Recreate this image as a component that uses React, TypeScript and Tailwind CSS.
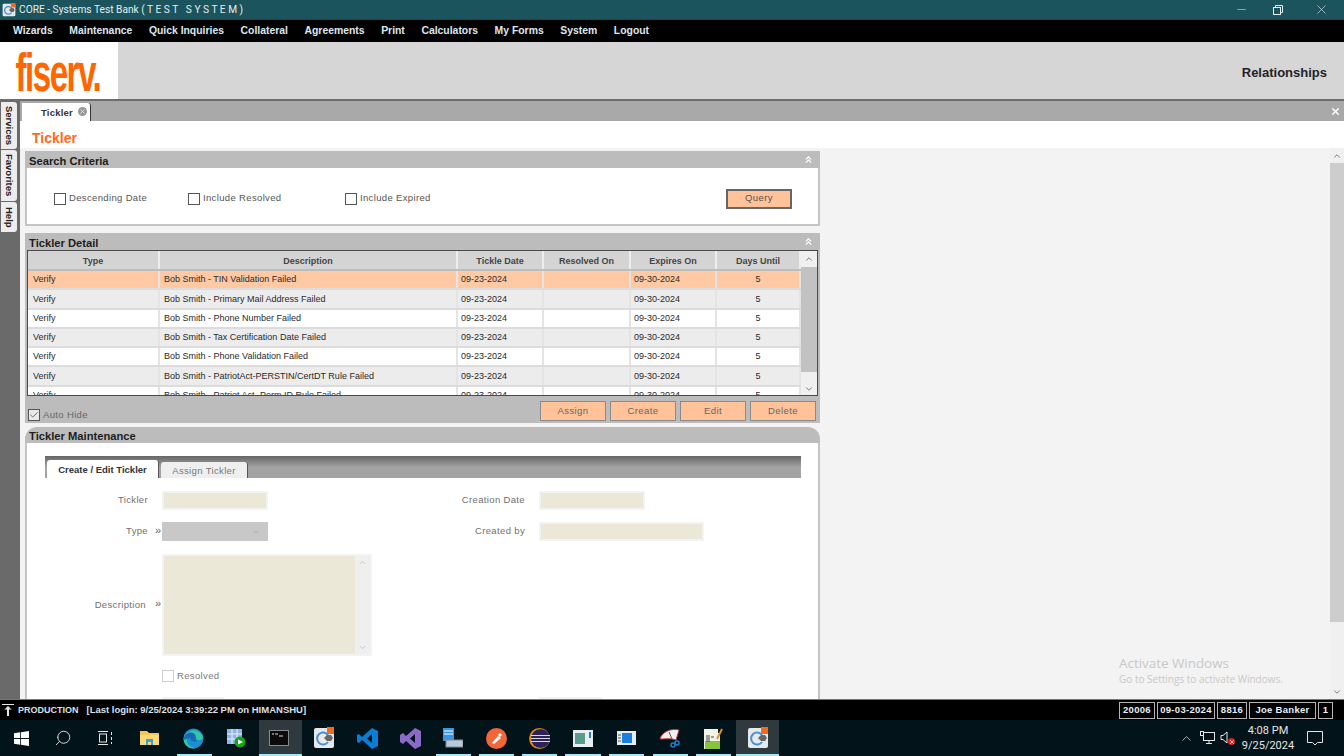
import React from 'react';
import { ChevronsUp, ChevronUp, ChevronDown, ChevronDown as Caret, X, Minus, Search, Check } from 'lucide-react';

const MENU = ['Wizards', 'Maintenance', 'Quick Inquiries', 'Collateral', 'Agreements', 'Print', 'Calculators', 'My Forms', 'System', 'Logout'];

const ROWS = [
    'Bob Smith - TIN Validation Failed',
    'Bob Smith - Primary Mail Address Failed',
    'Bob Smith - Phone Number Failed',
    'Bob Smith - Tax Certification Date Failed',
    'Bob Smith - Phone Validation Failed',
    'Bob Smith - PatriotAct-PERSTIN/CertDT Rule Failed',
    'Bob Smith - Patriot Act- Perm ID Rule Failed',
];

const COLS = 'grid grid-cols-[132px_298px_86px_87px_86px_84px]';

const CoreIcon: React.FC<{ size?: number }> = ({ size = 22 }) => (
    <svg width={size} height={size} viewBox="0 0 22 22">
        <rect x="1" y="1" width="20" height="20" rx="2" fill="#e6e9ec" />
        <rect x="14" y="0" width="7" height="7" fill="#f26a1b" />
        <path d="M15 8a6 6 0 1 0 0 7" fill="none" stroke="#4a90d0" strokeWidth="2" />
        <path d="M11 11l3-3h4l2 3-2 3h-4z" fill="#666" />
    </svg>
);

const SectionHeader: React.FC<{ title: string; collapse?: boolean; rounded?: boolean }> = ({ title, collapse, rounded }) => (
    <div className={`bg-[#bcbcbc] flex items-center justify-between pl-1 pr-1.5 ${rounded ? 'h-[16px] pt-[2px] rounded-t-[12px]' : 'h-[17px] pt-[3px]'}`}>
        <span className="text-[11.2px] font-bold text-[#1c1c1c]">{title}</span>
        {collapse && <ChevronsUp size={11} strokeWidth={2.5} className="text-white -mt-[3px]" />}
    </div>
);

const CheckBox: React.FC<{ label: string; width: string }> = ({ label, width }) => (
    <label className={`flex items-center gap-[3px] ${width}`}>
        <span className="w-[12px] h-[12px] border border-[#555] bg-white" />
        <span className="text-[9.5px] tracking-[0.35px] text-[#555]">{label}</span>
    </label>
);

const ActionButton: React.FC<{ label: string }> = ({ label }) => (
    <button className="w-[66px] h-[20px] bg-[#ffc299] border border-[#8a8a8a] text-[9.5px] tracking-[0.4px] text-[#666]">{label}</button>
);

const Field: React.FC<{ label: string; width: string; select?: boolean; chevrons?: boolean }> = ({ label, width, select, chevrons }) => (
    <div className="flex items-center h-[19px]">
        <span className="w-[123px] shrink-0 text-right text-[9.5px] tracking-[0.35px] text-[#6f6f6f]">{label}</span>
        <span className="w-[14px] shrink-0 text-right pr-[1px] text-[11px] leading-none text-[#666] -mt-[3px]">{chevrons ? '»' : ''}</span>
        {select ? (
            <span className={`${width} h-[19px] bg-[#c8c8c8] flex items-center justify-end pr-2`}>
                <Caret size={8} className="text-[#a5a5a5]" />
            </span>
        ) : (
            <span className={`${width} h-[19px] border-2 border-[#f3f3f3] bg-[#ebe8d8]`} />
        )}
    </div>
);

const TaskIcon: React.FC<{ underline?: boolean; active?: boolean; className?: string; children?: React.ReactNode }> = ({ underline, active, className, children }) => (
    <div className={`relative w-[43.2px] h-full flex items-center justify-center ${active ? 'bg-[#2f3a3e]' : ''} ${className || ''}`}>
        {children}
        {underline && <span className={`absolute bottom-0 h-[2px] bg-[#9fe9f7] ${active ? 'left-0 right-0' : 'left-[4px] right-[4px]'}`} />}
    </div>
);

const StatusBox: React.FC<{ text: string; width: string }> = ({ text, width }) => (
    <span className={`${width} h-[17px] border border-[#b5b5b5] flex items-center justify-center whitespace-nowrap text-[9.5px] font-bold tracking-[0.3px] text-[#e8f0f8]`}>{text}</span>
);

const App: React.FC = () => {
    return (
        <div className="w-[1344px] h-[756px] overflow-hidden flex flex-col bg-white font-['Liberation_Sans',Arial,sans-serif] relative">
            {/* Title bar */}
            <div className="h-[20px] bg-[#1b545c] flex items-center shrink-0 pl-[2px] border-b border-[#174a51]">
                <CoreIcon size={14} />
                <span className="ml-[3px] text-[10.2px] text-[#e4eef0] font-['Roboto',sans-serif]">CORE - Systems Test Bank ( T E S T&nbsp;&nbsp; S Y S T E M )</span>
                <div className="ml-auto flex items-center text-[#e6eef0]">
                    <Minus size={13} strokeWidth={1} className="mr-[25px]" />
                    <svg width="10" height="10" viewBox="0 0 10 10" className="mr-[31px]" fill="none" stroke="currentColor">
                        <rect x="0.5" y="2.5" width="7" height="7" />
                        <path d="M2.5 2.5v-2h7v7h-2" />
                    </svg>
                    <X size={15} strokeWidth={1} className="mr-[15px]" />
                </div>
            </div>

            {/* Menu */}
            <div className="h-[22px] bg-black flex items-center pl-[13px] gap-[16.6px] shrink-0">
                {MENU.map(m => (
                    <span key={m} className="text-[10.4px] font-bold text-[#dfe7ee]">{m}</span>
                ))}
            </div>

            {/* Brand header */}
            <div className="h-[57px] bg-[#d6d6d6] flex items-center shrink-0">
                <div className="w-[118px] h-full bg-white flex items-center justify-center">
                    <span className="text-[54px] leading-none font-bold text-[#ff6600] tracking-[-2.5px] scale-x-[0.615] mt-[2px] -ml-[2px]">fiserv.</span>
                </div>
                <span className="ml-auto mr-[17px] mt-[5px] text-[13px] font-bold text-[#1f1f2a]">Relationships</span>
            </div>
            <div className="h-[2px] bg-[#6d6d6d] shrink-0" />

            {/* Work area */}
            <div className="flex-1 min-h-0 flex">
                {/* Side rail */}
                <div className="w-[20px] bg-[#6a6a6a] shrink-0 flex flex-col pt-px gap-px">
                    {[['Services', 'h-[47px]'], ['Favorites', 'h-[51px]'], ['Help', 'h-[30px]']].map(([t, h]) => (
                        <div key={t} className={`${h} w-[16px] ml-px bg-[#ededed] rounded-r-[3px] flex items-center justify-center`}>
                            <span className="[writing-mode:vertical-rl] text-[9.5px] font-bold text-[#222]">{t}</span>
                        </div>
                    ))}
                </div>

                <div className="flex-1 min-w-0 flex flex-col">
                    {/* Tab strip */}
                    <div className="h-[20px] bg-[#a9a9a9] flex items-end shrink-0 pl-[2px] pr-[3px]">
                        <div className="w-[69px] h-[18px] bg-white rounded-tr-[3px] border-r border-[#333] flex items-center pl-[19px]">
                            <span className="text-[9.5px] font-bold text-[#333] tracking-[0.2px] mt-[2px]">Tickler</span>
                            <span className="ml-[5px] -mt-[2px] w-[9px] h-[9px] rounded-full bg-[#999] flex items-center justify-center">
                                <X size={7} strokeWidth={2} className="text-white" />
                            </span>
                        </div>
                        <X size={11} strokeWidth={3} className="ml-auto mb-[4px] text-white" />
                    </div>

                    {/* Page title */}
                    <div className="h-[27px] bg-white flex items-center pl-[12px] pt-[7px] shrink-0">
                        <span className="text-[14px] font-bold text-[#ff6a1a]">Tickler</span>
                    </div>

                    <div className="flex-1 min-h-0 flex bg-[#f3f3f3]">
                        {/* Panels */}
                        <div className="w-[795px] ml-[5px] pt-[3px] flex flex-col overflow-hidden shrink-0">
                            {/* Search Criteria */}
                            <section className="h-[75px] shrink-0 border-b-2 border-x-2 border-[#c4c4c4] bg-white">
                                <div className="-mx-[2px]"><SectionHeader title="Search Criteria" collapse /></div>
                                <div className="flex items-center h-[58px] pl-[27px] pt-[3px]">
                                    <CheckBox label="Descending Date" width="w-[134px]" />
                                    <CheckBox label="Include Resolved" width="w-[157px]" />
                                    <CheckBox label="Include Expired" width="w-[381px]" />
                                    <button className="w-[66px] h-[20px] bg-[#ffc299] border-2 border-[#666] text-[9.5px] tracking-[0.4px] text-[#555]">Query</button>
                                </div>
                            </section>

                            {/* Tickler Detail */}
                            <section className="mt-[7px] h-[190px] shrink-0 bg-[#bcbcbc]">
                                <SectionHeader title="Tickler Detail" collapse />
                                <div className="mx-[2px] h-[146px] border border-[#4a4a4a] flex overflow-hidden bg-white">
                                    <div className="w-[773px] shrink-0">
                                        <div className={`${COLS} h-[20px] bg-[#d4d4d4] border-b-2 border-[#bdbdbd]`}>
                                            {['Type', 'Description', 'Tickle Date', 'Resolved On', 'Expires On', 'Days Until'].map(h => (
                                                <div key={h} className="flex items-center justify-center pt-[4px] border-r-2 border-[#eeeeee] text-[9px] font-bold text-[#444]">{h}</div>
                                            ))}
                                        </div>
                                        {ROWS.map((desc, i) => (
                                            <div key={desc} className={`${COLS} h-[19.25px] border-b-2 border-[#dcdcdc] text-[9px] text-[#2a2a2a] ${i === 0 ? 'bg-[#ffc9a3]' : i % 2 === 1 ? 'bg-[#ececec]' : 'bg-white'}`}>
                                                <div className="flex items-center pl-[5px] pt-[1px] border-r-2 border-[#e4e4e4]">Verify</div>
                                                <div className="flex items-center pl-[4px] pt-[1px] border-r-2 border-[#e4e4e4]">{desc}</div>
                                                <div className="flex items-center pl-[3px] pt-[1px] border-r-2 border-[#e4e4e4]">09-23-2024</div>
                                                <div className="border-r-2 border-[#e4e4e4]" />
                                                <div className="flex items-center pl-[3px] pt-[1px] border-r-2 border-[#e4e4e4]">09-30-2024</div>
                                                <div className="flex items-center justify-center pt-[1px] border-r-2 border-[#e4e4e4]">5</div>
                                            </div>
                                        ))}
                                    </div>
                                    <div className="flex-1 bg-[#f0f0f0] flex flex-col items-center">
                                        <ChevronUp size={10} strokeWidth={2} className="text-[#666] my-[3px]" />
                                        <div className="w-full h-[105px] bg-[#c2c2c2]" />
                                        <ChevronDown size={10} strokeWidth={2} className="text-[#666] mt-[12px]" />
                                    </div>
                                </div>
                                <div className="flex items-start pl-[3px] pr-[4px] pt-[5px]">
                                    <div className="flex items-center gap-[3px] mt-[7px]">
                                        <span className="w-[12px] h-[12px] border border-[#555] bg-[#e8e8e8] flex items-center justify-center">
                                            <Check size={10} strokeWidth={2} className="text-[#555]" />
                                        </span>
                                        <span className="text-[9.5px] tracking-[0.35px] text-[#666]">Auto Hide</span>
                                    </div>
                                    <div className="ml-auto flex gap-[4px]">
                                        <ActionButton label="Assign" />
                                        <ActionButton label="Create" />
                                        <ActionButton label="Edit" />
                                        <ActionButton label="Delete" />
                                    </div>
                                </div>
                            </section>

                            {/* Tickler Maintenance */}
                            <section className="mt-[4px] flex-1 min-h-0 flex flex-col overflow-hidden">
                                <SectionHeader title="Tickler Maintenance" rounded />
                                <div className="flex-1 min-h-0 overflow-hidden bg-white border-x-2 border-[#c4c4c4] pl-[18px] pr-[17px] pt-[13px]">
                                    <div className="h-[22px] bg-gradient-to-b from-[#666] via-[#a3a3a3] to-[#a3a3a3] flex items-end pl-[2px] gap-[2px]">
                                        <div className="w-[112px] h-[18px] pt-[2px] bg-white rounded-t-[3px] border-r border-[#555] flex items-center justify-center text-[9.5px] font-bold text-[#333]">Create / Edit Tickler</div>
                                        <div className="w-[87px] h-[16px] pt-[2px] bg-[#efefef] rounded-t-[3px] border-r border-[#555] flex items-center justify-center text-[9.5px] tracking-[0.35px] text-[#777]">Assign Tickler</div>
                                    </div>

                                    <div className="flex mt-[13px] -ml-[20px]">
                                        <div className="w-[377px] flex flex-col shrink-0">
                                            <Field label="Tickler" width="w-[106px]" />
                                            <div className="mt-[12px]"><Field label="Type" width="w-[106px]" select chevrons /></div>
                                            <div className="mt-[13px] flex items-center h-[102px]">
                                                <span className="w-[123px] shrink-0 text-right pr-[2px] text-[9.5px] tracking-[0.35px] text-[#6f6f6f]">Description</span>
                                                <span className="w-[14px] shrink-0 text-right pr-[1px] text-[11px] leading-none text-[#666] -mt-[3px]">»</span>
                                                <div className="w-[210px] h-full border-2 border-[#f3f3f3] flex">
                                                    <div className="w-[191px] bg-[#ebe8d8]" />
                                                    <div className="flex-1 bg-[#efefef] flex flex-col items-center justify-between py-[2px]">
                                                        <ChevronUp size={9} className="text-[#bbb]" />
                                                        <ChevronDown size={9} className="text-[#bbb]" />
                                                    </div>
                                                </div>
                                            </div>
                                            <div className="mt-[14px] ml-[137px] h-[12px] flex items-center gap-[3px]">
                                                <span className="w-[12px] h-[12px] border border-[#ccc] bg-white" />
                                                <span className="text-[9.5px] tracking-[0.35px] text-[#7a7a7a]">Resolved</span>
                                            </div>
                                            <div className="mt-[15px] ml-[137px] w-[62px] h-[19px] border-2 border-[#f3f3f3] bg-[#ebe8d8]" />
                                        </div>
                                        <div className="flex flex-col">
                                            <Field label="Creation Date" width="w-[106px]" />
                                            <div className="mt-[12px]"><Field label="Created by" width="w-[165px]" /></div>
                                            <div className="mt-[156px] ml-[137px] w-[63px] h-[19px] border-2 border-[#f3f3f3] bg-[#ebe8d8]" />
                                        </div>
                                    </div>
                                </div>
                            </section>
                        </div>

                        <div className="flex-1" />

                        {/* Page scrollbar */}
                        <div className="w-[14px] shrink-0 bg-[#f0f0f0] flex flex-col items-center">
                            <ChevronUp size={10} strokeWidth={2} className="text-[#666] mt-[3px] mb-[2px]" />
                            <div className="w-full h-[459px] bg-[#cdcdcd]" />
                            <div className="flex-1" />
                            <ChevronDown size={10} strokeWidth={2} className="text-[#666] mb-[2px]" />
                        </div>
                    </div>
                </div>
            </div>

            {/* Status bar */}
            <div className="h-[21px] bg-black flex items-center shrink-0 border-t border-[#777]">
                <svg width="14" height="14" viewBox="0 0 14 14" className="ml-[1px]" fill="none" stroke="#e6e6e6">
                    <path d="M1 1.5h12" />
                    <path d="M7 13V4" strokeWidth="2" />
                    <path d="M4 6.5L7 3.5l3 3" fill="#e6e6e6" />
                </svg>
                <span className="ml-[3px] mt-[1px] text-[9px] font-bold text-[#d9e2ec]">PRODUCTION</span>
                <span className="ml-[8px] mt-[1px] text-[9.5px] font-bold text-[#d9e2ec]">[Last login: 9/25/2024 3:39:22 PM on HIMANSHU]</span>
                <div className="ml-auto mr-[11px] flex gap-[2px] mt-[1px]">
                    <StatusBox text="20006" width="w-[36px]" />
                    <StatusBox text="09-03-2024" width="w-[58px]" />
                    <StatusBox text="8816" width="w-[30px]" />
                    <StatusBox text="Joe  Banker" width="w-[67px]" />
                    <StatusBox text="1" width="w-[15px]" />
                </div>
            </div>

            {/* Windows taskbar */}
            <div className="h-[36px] bg-[#03131a] flex items-center shrink-0">
                <TaskIcon>
                    <svg width="15" height="15" viewBox="0 0 15 15" fill="#fff"><path d="M0 2.2l6.2-.9v5.8H0zM7 1.2L15 0v7.1H7zM0 7.9h6.2v5.8L0 12.8zM7 7.9h8V15l-8-1.2z" /></svg>
                </TaskIcon>
                <TaskIcon><Search size={18} strokeWidth={1.2} className="text-[#e6e6e6] -scale-x-100 -ml-[4px]" /></TaskIcon>
                <TaskIcon>
                    <svg width="16" height="14" viewBox="0 0 16 14" fill="none" stroke="#e6e6e6" className="-ml-[6px]"><path d="M1 .5h10M1 13.5h10" /><rect x="2.5" y="3" width="7" height="8" /><path d="M14.5 1v3M14.5 6v3M14.5 11v2" /></svg>
                </TaskIcon>
                <TaskIcon>
                    <svg width="19" height="16" viewBox="0 0 19 16" className="-ml-[4px]"><path d="M0 1h7l2 2h10v12H0z" fill="#f5c94e" /><path d="M0 5h19v10H0z" fill="#ffd976" /><path d="M6 9h7v6h-2v-3H8v3H6z" fill="#3aa0d8" /></svg>
                </TaskIcon>
                <TaskIcon underline>
                    <svg width="21" height="21" viewBox="0 0 21 21" className="-ml-[2px]"><circle cx="10.5" cy="10.5" r="10" fill="#1a8ed0" /><path d="M1 9C3 2 16-1 20 9c0 4-6 4-7 1 0-2-9-4-9 3 0 4 5 7 9 7C6 22-1 16 1 9z" fill="#34c6a0" /><path d="M1 11c0-8 12-9 12-1-1 1 0 3 1 3-3 1-7 0-7-3-3 0-6 3-6 1z" fill="#1668b8" /></svg>
                </TaskIcon>
                <TaskIcon>
                    <svg width="19" height="19" viewBox="0 0 19 19" className="-ml-[2px]"><rect x="0" y="0" width="15" height="15" fill="#8fb4e8" /><path d="M0 5h15M0 10h15M5 0v15M10 0v15" stroke="#eaf2fb" /><circle cx="13" cy="13" r="5.5" fill="#18a418" /><path d="M11 10.5l5 2.5-5 2.5z" fill="#fff" /></svg>
                </TaskIcon>
                <TaskIcon active underline>
                    <svg width="20" height="16" viewBox="0 0 20 16" className="-ml-[3px]"><rect x="0.5" y="0.5" width="19" height="15" fill="#0b0b0b" stroke="#8a8a8a" /><path d="M3 4h2M6 4h3M10 6h4" stroke="#ddd" /></svg>
                </TaskIcon>
                <TaskIcon><CoreIcon /></TaskIcon>
                <TaskIcon>
                    <svg width="21" height="21" viewBox="0 0 21 21"><path d="M15 0l6 3v15l-6 3L5 12l-3 3-2-1V7l2-1 3 3zM15 6l-5 4.500 5 4.500z" fill="#0a7ed4" fillRule="evenodd" /></svg>
                </TaskIcon>
                <TaskIcon>
                    <svg width="21" height="21" viewBox="0 0 21 21"><path d="M15 0l6 3v15l-6 3L6 13l-3 3-3-2V7l3-2 3 3zM15 6l-5 4.500 5 4.500z" fill="#8c6bc8" fillRule="evenodd" /></svg>
                </TaskIcon>
                <TaskIcon underline>
                    <svg width="20" height="20" viewBox="0 0 20 20"><rect x="0" y="0" width="11" height="13" fill="#3a95e0" /><path d="M1 3h9M1 6h9" stroke="#fff" /><rect x="3" y="12" width="17" height="7" fill="#b9c9d6" stroke="#7b8b96" /></svg>
                </TaskIcon>
                <TaskIcon underline>
                    <svg width="21" height="21" viewBox="0 0 21 21"><circle cx="10.5" cy="10.500" r="10.500" fill="#f0673a" /><path d="M6 15l6-7 3 2-7 6zM12 7l2-2 2 2-2 2z" fill="#fff" /></svg>
                </TaskIcon>
                <TaskIcon underline>
                    <svg width="21" height="21" viewBox="0 0 21 21"><circle cx="10.500" cy="10.500" r="10.500" fill="#e08a1e" /><circle cx="11.500" cy="10.500" r="9.500" fill="#2c2255" /><path d="M2 7.500h19M2 10.500h19M2 13.500h19" stroke="#dcd8ea" /></svg>
                </TaskIcon>
                <TaskIcon underline>
                    <svg width="20" height="17" viewBox="0 0 20 17"><rect width="20" height="17" fill="#e8eef0" /><rect x="2" y="3" width="10" height="11" fill="#5c9a8c" /><rect x="16" y="2" width="2" height="6" fill="#2a7fc0" /></svg>
                </TaskIcon>
                <TaskIcon underline>
                    <svg width="19" height="14" viewBox="0 0 19 14"><rect width="19" height="14" fill="#e8eef0" /><rect x="5" y="2" width="10" height="10" fill="#1a7fe0" /><path d="M1 4h3M1 7h3M1 10h3" stroke="#555" /></svg>
                </TaskIcon>
                <TaskIcon underline className="ml-[1px]">
                    <svg width="22" height="20" viewBox="0 0 22 20"><path d="M1 11C3 3 14 0 20 2l-3 10c-5-2-11-1-16-1z" fill="#f0eeee" stroke="#c23a3a" /><path d="M10 4l3 7" stroke="#555" /><circle cx="14" cy="17" r="2" fill="none" stroke="#1d7fd0" strokeWidth="1.500" /><circle cx="18" cy="15" r="2" fill="none" stroke="#1d7fd0" strokeWidth="1.500" /></svg>
                </TaskIcon>
                <TaskIcon underline>
                    <svg width="20" height="21" viewBox="0 0 20 21"><path d="M0 1h14v4h2v16H0z" fill="#f2f4e8" /><rect x="1" y="13" width="15" height="8" fill="#86c440" /><path d="M3 7v7M5 7v7M7 9h3" stroke="#444" /><path d="M13 11l5-10" stroke="#d9902a" strokeWidth="2" /></svg>
                </TaskIcon>
                <TaskIcon active underline className="ml-[1px]"><CoreIcon /></TaskIcon>

                {/* Tray */}
                <div className="ml-auto flex items-center text-[#e6e6e6]">
                    <ChevronUp size={15} strokeWidth={1.2} className="mr-[6px]" />
                    <svg width="15" height="14" viewBox="0 0 15 14" fill="none" stroke="#e6e6e6" className="mr-[5px]">
                        <rect x="3.500" y="1.500" width="11" height="8" />
                        <path d="M9 9.500v3M6 12.500h6" />
                        <rect x="0.500" y="0.500" width="3" height="4" fill="#03131a" />
                    </svg>
                    <div className="relative w-[14px] h-[14px] mr-[3px]">
                        <svg width="9" height="13" viewBox="0 0 9 13" fill="none" stroke="#e6e6e6"><path d="M1 4.500h2l4-3.500v11l-4-3.500H1z" /></svg>
                        <span className="absolute -right-[1px] bottom-0 w-[7px] h-[7px] rounded-full bg-[#e02020] flex items-center justify-center">
                            <X size={6} strokeWidth={3} className="text-white" />
                        </span>
                    </div>
                    <div className="flex flex-col items-center text-[11px] leading-[15px] text-[#e6e6e6] font-['Roboto',sans-serif] w-[62px]">
                        <span>4:08 PM</span>
                        <span>9/25/2024</span>
                    </div>
                    <svg width="16" height="15" viewBox="0 0 16 15" fill="none" stroke="#e6e6e6" className="ml-[8px] mr-[21px]">
                        <path d="M.500.500h15v11h-5l-2.500 2.500-2.500-2.500h-5z" />
                    </svg>
                </div>
            </div>

            {/* Activation watermark */}
            <div className="absolute left-[1119px] top-[654px] font-['Open_Sans',sans-serif] text-[#c8c8c8] pointer-events-none">
                <div className="text-[13.4px] leading-[18px]">Activate Windows</div>
                <div className="text-[10px] leading-[14px]">Go to Settings to activate Windows.</div>
            </div>
        </div>
    );
};

export default App;
